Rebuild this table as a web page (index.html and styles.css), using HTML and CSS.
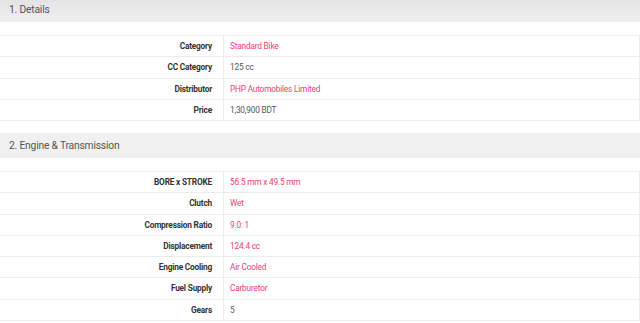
FILE: index.html
```html
<!DOCTYPE html>
<html>
<head>
<meta charset="utf-8">
<link rel="stylesheet" href="styles.css">
</head>
<body>
<div class="page">
  <section class="spec">
    <h2 class="spec-title spec-title--first">1. Details</h2>
    <div class="spec-table">
      <div class="row"><div class="label">Category</div><div class="value accent">Standard Bike</div></div>
      <div class="row"><div class="label">CC Category</div><div class="value">125 cc</div></div>
      <div class="row"><div class="label">Distributor</div><div class="value accent">PHP Automobiles Limited</div></div>
      <div class="row"><div class="label">Price</div><div class="value">1,30,900 BDT</div></div>
    </div>
  </section>
  <section class="spec">
    <h2 class="spec-title">2. Engine &amp; Transmission</h2>
    <div class="spec-table">
      <div class="row"><div class="label">BORE x STROKE</div><div class="value accent">56.5 mm x 49.5 mm</div></div>
      <div class="row"><div class="label">Clutch</div><div class="value accent">Wet</div></div>
      <div class="row"><div class="label">Compression Ratio</div><div class="value accent">9.0: 1</div></div>
      <div class="row"><div class="label">Displacement</div><div class="value accent">124.4 cc</div></div>
      <div class="row"><div class="label">Engine Cooling</div><div class="value accent">Air Cooled</div></div>
      <div class="row"><div class="label">Fuel Supply</div><div class="value accent">Carburetor</div></div>
      <div class="row"><div class="label">Gears</div><div class="value">5</div></div>
    </div>
  </section>
</div>
</body>
</html>
```
FILE: styles.css
```css
html, body {
  margin: 0;
  padding: 0;
  background: #fff;
  font-family: Roboto, "Liberation Sans", sans-serif;
  overflow: hidden;
}
.page {
  margin-top: -3px;
  width: 640px;
}
.spec {
  margin-bottom: 12px;
}
.spec-title {
  margin: 0;
  height: 25px;
  line-height: 25px;
  padding-left: 9px;
  font-size: 10.3px;
  letter-spacing: -0.2px;
  font-weight: 400;
  color: #555;
  background: #f0f0f0;
}
.spec-title--first {
  background: linear-gradient(#e2e2e4, #efefef);
}
.spec-table {
  margin-top: 13px;
  border-right: 1px solid #ececec;
  border-bottom: 1px solid #ececec;
}
.row {
  display: grid;
  grid-template-columns: 224px 1fr;
  height: 20.25px;
  border-top: 1px solid #ececec;
  font-size: 8.3px;
  letter-spacing: -0.2px;
}
.label {
  text-align: right;
  padding-right: 11px;
  line-height: 20.25px;
  font-weight: 700;
  color: #333;
  border-right: 1px solid #ececec;
}
.value {
  padding-left: 6px;
  line-height: 20.25px;
  color: #555;
}
.value.accent {
  color: #f4406b;
}
```
